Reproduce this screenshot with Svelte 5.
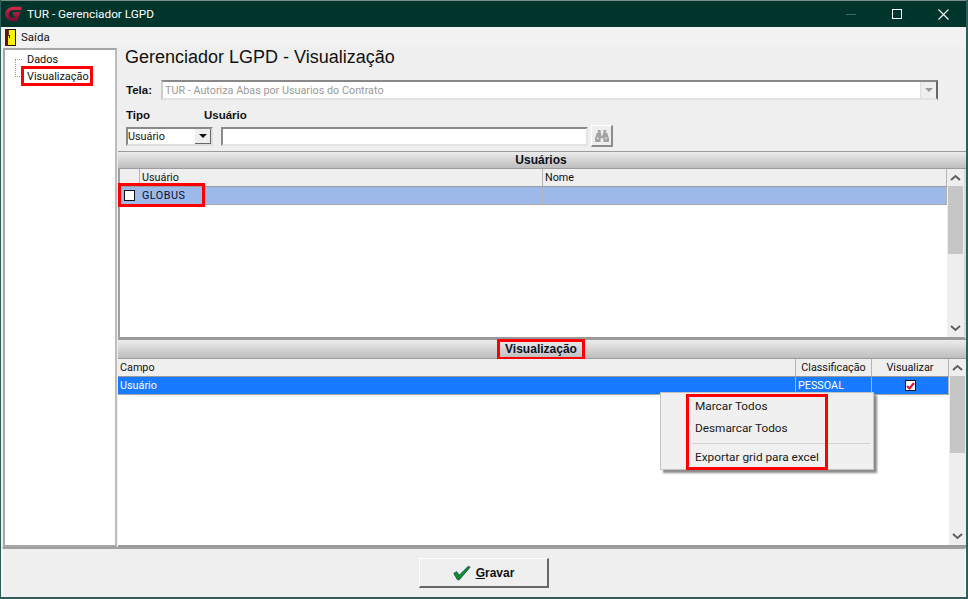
<script>
  const menu = ['Marcar Todos', 'Desmarcar Todos'];
</script>

<div class="window">
  <header class="titlebar">
    <svg class="logo" width="18" height="18" viewBox="0 0 18 18">
      <defs>
        <linearGradient id="logoFill" x1="0" y1="0" x2="0" y2="1">
          <stop offset="0" stop-color="#c92a4a"/>
          <stop offset="1" stop-color="#7d1030"/>
        </linearGradient>
      </defs>
      <path d="M16.500 3.500H9C4.500 3.500 2 6 2 9.300c0 3.400 2.500 5.200 6 5.200h3l2-5.700H8" stroke="url(#logoFill)" stroke-width="3.700" fill="none"/>
    </svg>
    <span class="title">TUR - Gerenciador LGPD</span>
    <div class="controls">
      <span class="min"></span>
      <span class="max"></span>
      <svg width="11" height="11" viewBox="0 0 11 11"><path d="M.5.5l10 10M10.500.5l-10 10" stroke="#fff" stroke-width="1.100" fill="none"/></svg>
    </div>
  </header>

  <nav class="menubar">
    <svg width="11" height="17" viewBox="0 0 11 17">
      <rect x="0" y="0" width="11" height="17" fill="#1c1208"/>
      <rect x="0" y="0" width="3" height="17" fill="#6b0d10"/>
      <rect x="3" y="1" width="7" height="15" fill="#f7f400"/>
      <rect x="3" y="1" width="1" height="6" fill="#5a4410"/>
      <rect x="4" y="6" width="1" height="3" fill="#111"/>
    </svg>
    <span>Saída</span>
  </nav>

  <div class="body">
    <aside class="tree">
      <div class="branch"></div>
      <div class="node">Dados</div>
      <div class="node">Visualização</div>
      <div class="mark tree-mark"></div>
    </aside>

    <main class="main">
      <h1>Gerenciador LGPD - Visualização</h1>

      <div class="tela-row">
        <label for="tela">Tela:</label>
        <div class="tela-select" id="tela">
          <span class="tela-text">TUR - Autoriza Abas por Usuarios do Contrato</span>
          <span class="tela-btn"><i class="arrow grey"></i></span>
        </div>
      </div>

      <div class="filter-labels">
        <b class="l-tipo">Tipo</b>
        <b>Usuário</b>
      </div>
      <div class="filter-row">
        <div class="combo"><span>Usuário</span><span class="combo-btn"><i class="arrow"></i></span></div>
        <div class="search"></div>
        <button class="binoc" aria-label="Pesquisar">
          <svg width="14" height="12" viewBox="0 0 15 13" fill="#a2a2a2">
            <rect x="3" y="0" width="3" height="3"/><rect x="9" y="0" width="3" height="3"/>
            <path d="M2 3h4.500v3h2V3H13l2 6v4H9V9H6v4H0V9z"/>
            <rect x="2" y="8" width="2" height="2" fill="#dcdcdc"/><rect x="11" y="8" width="2" height="2" fill="#dcdcdc"/>
          </svg>
        </button>
      </div>

      <section class="panel top">
        <div class="band">Usuários</div>
        <div class="grid-wrap top-wrap">
          <div class="grid">
            <div class="head users-cols">
              <span class="cell"></span><span class="cell">Usuário</span><span class="cell">Nome</span>
            </div>
            <div class="row selected-light users-cols">
              <span class="cell check-cell"><i class="check"></i></span>
              <span class="cell globus">GLOBUS</span>
              <span class="cell"></span>
            </div>
          </div>
          <div class="scroll">
            <svg width="17" height="17" viewBox="0 0 17 17"><path d="M4 11l4.500-4 4.500 4" stroke="#606060" stroke-width="2" fill="none"/></svg>
            <div class="thumb"></div>
            <div class="track"></div>
            <svg width="17" height="17" viewBox="0 0 17 17"><path d="M4 6l4.500 4 4.500-4" stroke="#606060" stroke-width="2" fill="none"/></svg>
          </div>
        </div>
        <div class="mark row-mark"></div>
      </section>

      <section class="panel bottom">
        <div class="band band-b"><span class="band-label">Visualização</span></div>
        <div class="grid-wrap bottom-wrap">
          <div class="grid">
            <div class="head vis-cols">
              <span class="cell">Campo</span><span class="cell center">Classificação</span><span class="cell center">Visualizar</span>
            </div>
            <div class="row selected-blue vis-cols">
              <span class="cell">Usuário</span>
              <span class="cell">PESSOAL</span>
              <span class="cell center"><i class="checked">
                <svg width="9" height="8" viewBox="0 0 9 8"><path d="M1 4l2.500 2.500L8 1" stroke="#e0102a" stroke-width="2" fill="none"/></svg>
              </i></span>
            </div>
          </div>
          <div class="scroll">
            <svg width="17" height="17" viewBox="0 0 17 17"><path d="M4 11l4.500-4 4.500 4" stroke="#606060" stroke-width="2" fill="none"/></svg>
            <div class="thumb"></div>
            <div class="track"></div>
            <svg width="17" height="17" viewBox="0 0 17 17"><path d="M4 6l4.500 4 4.500-4" stroke="#606060" stroke-width="2" fill="none"/></svg>
          </div>
        </div>
      </section>
    </main>
  </div>

  <footer class="footer">
    <button class="save">
      <svg width="18" height="16" viewBox="0 0 20 17">
        <path d="M1 9l3-2 3 4L17 1l2 1L7 16h-2z" fill="#0a9a1a" stroke="#0a1a70" stroke-width=".8"/>
      </svg>
      <span><u>G</u>ravar</span>
    </button>
  </footer>

  <div class="context">
    {#each menu as item}
      <div class="ctx-item">{item}</div>
    {/each}
    <div class="ctx-sep"></div>
    <div class="ctx-item last">Exportar grid para excel</div>
    <div class="mark ctx-mark"></div>
  </div>
</div>

<style>
  :global(body) {
    margin: 0;
    background: #fff;
  }
  .window {
    position: relative;
    box-sizing: border-box;
    width: 968px;
    height: 599px;
    display: flex;
    flex-direction: column;
    background: #efefef;
    border-right: 2px solid #2f5d57;
    border-left: 1px solid #2f5d57;
    border-bottom: 2px solid #2f5d57;
    font-family: Roboto, sans-serif;
    font-size: 11px;
    color: #111;
    overflow: hidden;
  }
  .titlebar {
    flex: 0 0 27px;
    display: flex;
    align-items: center;
    background: #00352c;
    color: #fff;
    border-top: 1px solid #7d8f8b;
    box-sizing: border-box;
    padding-left: 4px;
  }
  .logo { margin-right: 4px; }
  .title {
    font-family: Roboto, sans-serif;
    font-size: 11.800px;
  }
  .controls {
    margin-left: auto;
    display: flex;
    align-items: center;
  }
  .min {
    width: 10px;
    height: 1px;
    background: #3c6a62;
    margin-right: 36px;
  }
  .max {
    width: 8px;
    height: 8px;
    border: 1px solid #fff;
    margin-right: 36px;
  }
  .controls svg { margin-right: 17px; }
  .menubar {
    flex: 0 0 20px;
    display: flex;
    align-items: center;
    gap: 5px;
    padding-left: 4px;
    font-family: Roboto, sans-serif;
    font-size: 11.500px;
    background: #f2f2f2;
  }
  .body {
    flex: 1;
    min-height: 0;
    display: flex;
  }
  .tree {
    position: relative;
    box-sizing: border-box;
    width: 114px;
    margin: 1px 0 0 2px;
    background: #fff;
    border: 2px solid #a6a6a6;
    border-right-color: #bdbdbd;
    padding: 1px 0 0 22px;
    font-family: Roboto, sans-serif;
    font-size: 10.900px;
    line-height: 17px;
  }
  .branch {
    position: absolute;
    left: 10px;
    top: 9px;
    width: 6px;
    height: 16px;
    border-left: 1px dotted #999;
    border-top: 1px dotted #999;
    border-bottom: 1px dotted #999;
  }
  .mark {
    position: absolute;
    border: 3px solid #f00;
    box-sizing: border-box;
    pointer-events: none;
  }
  .tree-mark {
    left: 16px;
    top: 16px;
    width: 72px;
    height: 20px;
  }
  .main {
    flex: 1;
    min-width: 0;
    display: flex;
    flex-direction: column;
    padding: 0 0 0 2px;
  }
  h1 {
    margin: 0;
    padding: 0 0 0 6px;
    height: 33px;
    font-family: "Liberation Sans", sans-serif;
    font-size: 18px;
    font-weight: 400;
    line-height: 20px;
  }
  .tela-row {
    display: flex;
    align-items: center;
    padding-left: 7px;
    height: 20px;
  }
  .tela-row label {
    font-weight: 700;
    font-family: "Liberation Sans", sans-serif;
    font-size: 11.500px;
    width: 35px;
  }
  .tela-select {
    box-sizing: border-box;
    width: 777px;
    height: 20px;
    display: flex;
    align-items: center;
    justify-content: space-between;
    background: #fff;
    border: 2px solid #888;
    border-right-color: #666;
    border-bottom-color: #e2e2e2;
    border-left-color: #ccc;
    padding-left: 2px;
    color: #9a9a9a;
    font-family: Roboto, sans-serif;
    font-size: 10.800px;
  }
  .tela-text { padding-top: 1px; }
  .tela-btn {
    width: 15px;
    height: 16px;
    background: #eee;
    display: flex;
    align-items: center;
    justify-content: center;
    border-left: 1px solid #ddd;
  }
  .arrow {
    display: block;
    width: 0;
    height: 0;
    border: 4px solid transparent;
    border-top: 4px solid #111;
    border-bottom: 0;
  }
  .arrow.grey { border-top-color: #999; }
  .filter-labels {
    display: flex;
    align-items: center;
    height: 18px;
    margin-top: 6px;
    padding-left: 7px;
    font-family: "Liberation Sans", sans-serif;
    font-size: 11.500px;
  }
  .l-tipo { width: 78px; }
  .filter-row {
    display: flex;
    align-items: center;
    height: 24px;
    padding-left: 7px;
  }
  .combo {
    box-sizing: border-box;
    width: 87px;
    height: 19px;
    background: #fff;
    display: flex;
    align-items: center;
    justify-content: space-between;
    padding-left: 0;
    border: 2px solid #8a8a8a;
    border-bottom-color: #dedede;
    border-right-color: #dedede;
    font-family: Roboto, sans-serif;
    font-size: 10.800px;
  }
  .combo-btn {
    width: 16px;
    height: 15px;
    background: #eee;
    display: flex;
    align-items: center;
    justify-content: center;
    border-right: 1px solid #666;
    border-bottom: 1px solid #666;
    box-sizing: border-box;
  }
  .search {
    box-sizing: border-box;
    width: 367px;
    height: 19px;
    margin-left: 8px;
    background: #fff;
    border: 2px solid #8a8a8a;
    border-bottom-color: #e4e4e4;
    border-right-color: #e4e4e4;
  }
  .binoc {
    box-sizing: border-box;
    width: 22px;
    height: 22px;
    margin-left: 3px;
    padding: 3px 0 0;
    background: #eee;
    border: 0;
    border-top: 1px solid #fff;
    border-left: 1px solid #fff;
    border-right: 2px solid #8c8c8c;
    border-bottom: 2px solid #8c8c8c;
  }
  .panel {
    position: relative;
    display: flex;
    flex-direction: column;
    margin-left: -1px;
  }
  .panel.top { margin-top: 3px; }
  .band {
    height: 18px;
    box-sizing: border-box;
    border-top: 1px solid #9c9c9c;
    border-bottom: 1px solid #9c9c9c;
    background: linear-gradient(#ececec, #bdbdbd);
    text-align: center;
    font-family: "Liberation Sans", sans-serif;
    font-weight: 700;
    font-size: 12px;
    line-height: 16px;
    padding-right: 2px;
    color: #0c1020;
  }
  .band-b {
    height: 20px;
    line-height: 19px;
    display: flex;
    justify-content: center;
  }
  .band-label {
    box-sizing: border-box;
    width: 88px;
    height: 21px;
    margin-top: -1px;
    border: 3px solid #f00;
    line-height: 15px;
  }
  .grid-wrap {
    display: flex;
    background: #fff;
    box-sizing: border-box;
  }
  .top-wrap {
    height: 170px;
    border: 2px solid #a0a0a0;
    border-top: 0;
    border-right: 2px solid #d9d9d9;
    border-bottom-color: #9a9a9a;
  }
  .bottom-wrap {
    height: 188px;
    border-left: 0;
    border-bottom: 2px solid #9a9a9a;
  }
  .grid {
    flex: 1;
    min-width: 0;
    font-family: Roboto, sans-serif;
    font-size: 10.800px;
  }
  .head {
    display: grid;
    height: 18px;
    background: #efefef;
    border-bottom: 1px solid #9a9a9a;
    box-sizing: border-box;
  }
  .row {
    display: grid;
    height: 18px;
    box-sizing: border-box;
    border-bottom: 1px solid #a8a8a8;
  }
  .users-cols { grid-template-columns: 20px 403px 1fr; }
  .vis-cols { grid-template-columns: 678px 76px 1fr; }
  .cell {
    display: flex;
    align-items: center;
    padding-left: 2px;
    border-right: 1px solid #b5b5b5;
    white-space: nowrap;
    overflow: hidden;
  }
  .center { justify-content: center; padding-left: 0; }
  .selected-light { background: #9db9e9; color: #0a0f30; }
  .selected-blue { background: #187bff; color: #fff; }
  .check-cell { justify-content: center; padding: 0; border-right-color: #a7bad9; }
  .check {
    display: block;
    box-sizing: border-box;
    width: 11px;
    height: 11px;
    background: #fff;
    border: 1px solid #111;
  }
  .globus { letter-spacing: 0.500px; }
  .checked {
    display: flex;
    align-items: center;
    justify-content: center;
    box-sizing: border-box;
    width: 11px;
    height: 11px;
    background: #fff;
    border: 1px solid #111;
  }
  .scroll {
    flex: 0 0 17px;
    display: flex;
    flex-direction: column;
    background: #eee;
  }
  .thumb {
    height: 68px;
    background: #c6c6c6;
    margin: 0 1px;
  }
  .bottom-wrap .thumb { height: 77px; }
  .track { flex: 1; }
  .row-mark {
    left: 0;
    top: 32px;
    width: 87px;
    height: 24px;
  }
  .footer {
    flex: 0 0 50px;
    box-sizing: border-box;
    display: flex;
    justify-content: center;
    align-items: center;
    border-top: 2px solid #a0a0a0;
    border-left: 1px solid #fff;
    border-right: 1px solid #fff;
    margin-left: 1px;
  }
  .save {
    box-sizing: border-box;
    width: 130px;
    height: 30px;
    display: flex;
    align-items: center;
    justify-content: center;
    gap: 5px;
    background: #efefef;
    border: 0;
    border-top: 1px solid #fff;
    border-left: 1px solid #fff;
    border-right: 2px solid #666;
    border-bottom: 2px solid #666;
    font-family: "Liberation Sans", sans-serif;
    font-weight: 700;
    font-size: 12px;
    color: #111;
  }
  .context {
    position: absolute;
    left: 659px;
    top: 392px;
    box-sizing: border-box;
    width: 214px;
    height: 78px;
    padding: 2px 0 0 34px;
    background: #f0f0f0;
    border: 1px solid #c4c4c4;
    box-shadow: 3px 3px 2px rgba(60, 60, 60, 0.6);
    font-family: Roboto, sans-serif;
    font-size: 11.800px;
    color: #1a1a1a;
  }
  .ctx-item {
    height: 22px;
    line-height: 22px;
  }
  .ctx-sep {
    height: 1px;
    background: #d2d2d2;
    margin: 4px 3px 2px -3px;
  }
  .mark.ctx-mark {
    left: 25px;
    top: 1px;
    width: 142px;
    height: 76px;
  }
</style>
